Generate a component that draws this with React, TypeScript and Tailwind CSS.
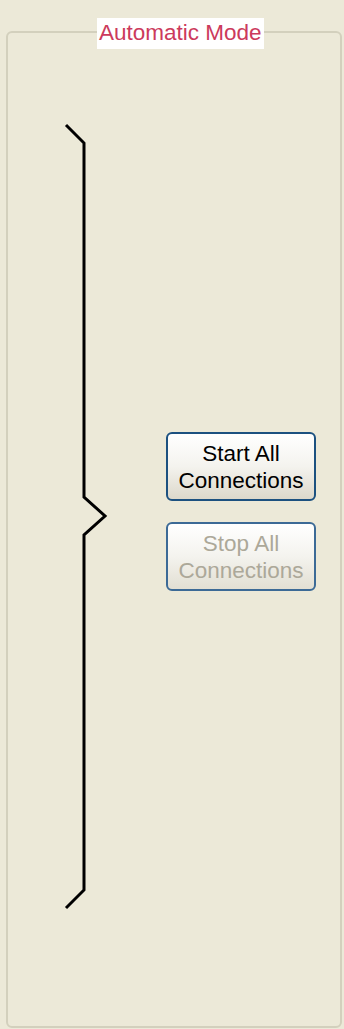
export default function App() {
  return (
    <div
      className="h-[1029px] w-[344px] overflow-hidden bg-[#ece9d8] pt-[31px]"
      style={{ fontFamily: '"Liberation Sans", Arial, sans-serif' }}
    >
      <div className="relative ml-[6px] h-[997px] w-[336px] rounded-[6px] border-2 border-[#d3d0bd]">
        <div className="absolute left-[89px] top-[-15px] flex h-[31px] items-center bg-white px-[2px] text-[22.5px] leading-none text-[#cc3a5c]">
          Automatic Mode
        </div>

        <div className="flex items-center pt-[88px]">
          <svg
            width="48"
            height="796"
            viewBox="0 0 48 796"
            className="ml-[52px] shrink-0"
          >
            <path
              d="M6 4 L24 22 L24 376 L45 395 L24 414 L24 769 L6 787"
              fill="none"
              stroke="#000"
              strokeWidth="3"
              strokeLinejoin="miter"
            />
          </svg>

          <div className="ml-[58px] mb-[15px] flex flex-col gap-[21px]">
            <button
              type="button"
              className="flex h-[69px] w-[150px] flex-col items-center justify-center rounded-[6px] border-2 border-[#1c5180] bg-gradient-to-b from-white via-[#f4f3ee] to-[#dcd8cb] text-[22.5px] leading-[27px] text-black"
            >
              <span>Start All</span>
              <span>Connections</span>
            </button>
            <button
              type="button"
              disabled
              className="flex h-[69px] w-[150px] flex-col items-center justify-center rounded-[6px] border-2 border-[#3c6a96] bg-gradient-to-b from-white via-[#f4f3ee] to-[#e2dfd3] text-[22.5px] leading-[27px] text-[#aca899]"
            >
              <span>Stop All</span>
              <span>Connections</span>
            </button>
          </div>
        </div>
      </div>
    </div>
  );
}
